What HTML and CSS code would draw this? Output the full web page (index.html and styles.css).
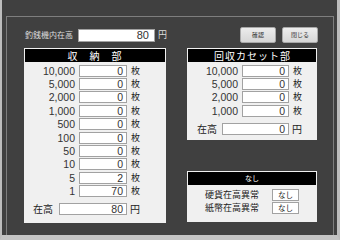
FILE: index.html
```html
<!DOCTYPE html>
<html lang="ja">
<head>
    <meta charset="UTF-8">
    <title>釣銭機内在高</title>
    <link rel="stylesheet" href="styles.css">
</head>
<body>
    <div class="window">
        <div class="frame">
            <div class="top-row">
                <span class="top-label">釣銭機内在高</span>
                <span class="box top-box">80</span>
                <span class="unit">円</span>
                <div class="buttons">
                    <button class="btn">確認</button>
                    <button class="btn">閉じる</button>
                </div>
            </div>
            <div class="columns">
                <div class="panel storage">
                    <div class="panel-head wide">収　納　部</div>
                    <div class="rows">
                        <div class="row"><span class="label">10,000</span><span class="box">0</span><span class="unit">枚</span></div>
                        <div class="row"><span class="label">5,000</span><span class="box">0</span><span class="unit">枚</span></div>
                        <div class="row"><span class="label">2,000</span><span class="box">0</span><span class="unit">枚</span></div>
                        <div class="row"><span class="label">1,000</span><span class="box">0</span><span class="unit">枚</span></div>
                        <div class="row"><span class="label">500</span><span class="box">0</span><span class="unit">枚</span></div>
                        <div class="row"><span class="label">100</span><span class="box">0</span><span class="unit">枚</span></div>
                        <div class="row"><span class="label">50</span><span class="box">0</span><span class="unit">枚</span></div>
                        <div class="row"><span class="label">10</span><span class="box">0</span><span class="unit">枚</span></div>
                        <div class="row"><span class="label">5</span><span class="box">2</span><span class="unit">枚</span></div>
                        <div class="row"><span class="label">1</span><span class="box">70</span><span class="unit">枚</span></div>
                    </div>
                    <div class="total total-left">
                        <span class="total-label">在高</span><span class="box">80</span><span class="unit">円</span>
                    </div>
                </div>
                <div class="side">
                    <div class="panel cassette">
                        <div class="panel-head spaced">回収カセット部</div>
                        <div class="rows">
                            <div class="row"><span class="label">10,000</span><span class="box">0</span><span class="unit">枚</span></div>
                            <div class="row"><span class="label">5,000</span><span class="box">0</span><span class="unit">枚</span></div>
                            <div class="row"><span class="label">2,000</span><span class="box">0</span><span class="unit">枚</span></div>
                            <div class="row"><span class="label">1,000</span><span class="box">0</span><span class="unit">枚</span></div>
                        </div>
                        <div class="total total-right">
                            <span class="total-label">在高</span><span class="box">0</span><span class="unit">円</span>
                        </div>
                    </div>
                    <div class="panel status">
                        <div class="panel-head small">なし</div>
                        <div class="status-row"><span class="status-label">硬貨在高異常</span><span class="flag">なし</span></div>
                        <div class="status-row"><span class="status-label">紙幣在高異常</span><span class="flag">なし</span></div>
                    </div>
                </div>
            </div>
        </div>
    </div>
</body>
</html>
```

FILE: styles.css
```css
body {
    margin: 0;
    background-color: #404040;
    font-family: "Liberation Sans", "Noto Sans CJK JP", sans-serif;
    color: #222;
}
.window {
    width: 340px;
    height: 240px;
    box-sizing: border-box;
    border-left: 2px solid #bdbdbd;
    border-right: 3px solid #bdbdbd;
    border-bottom: 5px solid #c4c4c4;
    padding-top: 16px;
}
.frame {
    margin-left: 4px;
    width: 328px;
    height: 219px;
    box-sizing: border-box;
    border: 1px solid #7e7e7e;
    border-bottom: none;
    padding: 10px 15px 0 17px;
}
.top-row {
    display: flex;
    align-items: center;
    height: 16px;
    line-height: 12px;
}
.top-label {
    font-family: "Noto Sans CJK JP", sans-serif;
    font-size: 8px;
    color: #dcdcdc;
    margin-left: 1px;
    width: 53px;
}
.top-row .unit {
    color: #dcdcdc;
    font-size: 9px;
    margin-left: 3px;
}
.box {
    display: block;
    flex: none;
    box-sizing: border-box;
    height: 12px;
    line-height: 10px;
    background: #fff;
    border: 1px solid #a2a2a2;
    text-align: right;
    padding-right: 3px;
    font-size: 10.5px;
    color: #333;
}
.top-box {
    width: 77px;
    height: 13px;
    line-height: 11px;
    padding-right: 5px;
    font-size: 11px;
}
.buttons {
    margin-left: auto;
    display: flex;
    gap: 6px;
}
.btn {
    width: 36px;
    height: 16px;
    padding: 0;
    border: 1px solid #a8a8a8;
    border-radius: 2px;
    background: linear-gradient(#ececec, #d6d6d6);
    font-family: "Noto Sans CJK JP", sans-serif;
    font-size: 6px;
    line-height: 8px;
    color: #333;
}
.columns {
    display: flex;
    gap: 21px;
    margin-top: 5px;
}
.panel {
    background: #f0f0f0;
    padding: 1px;
    box-sizing: border-box;
}
.storage {
    width: 142px;
    height: 175px;
}
.side {
    width: 130px;
}
.cassette {
    height: 92px;
}
.panel-head {
    height: 13px;
    line-height: 13px;
    background: #000;
    color: #fff;
    text-align: center;
    font-family: "Noto Sans CJK JP", sans-serif;
    font-size: 10px;
}
.panel-head.wide {
    letter-spacing: 1px;
}
.panel-head.spaced {
    letter-spacing: 1px;
    padding-left: 1px;
}
.panel-head.small {
    font-size: 7px;
}
.rows {
    margin-top: 2px;
}
.row {
    display: flex;
    align-items: center;
    height: 13.4px;
    line-height: 12px;
}
.row .label {
    width: 50px;
    text-align: right;
    font-size: 10.5px;
    color: #333;
}
.row .box {
    margin-left: 4px;
    width: 48px;
}
.cassette .row .box {
    width: 47px;
}
.unit {
    font-family: "Noto Sans CJK JP", sans-serif;
    font-size: 10px;
    margin-left: 3px;
    color: #222;
}
.row .unit {
    font-size: 9px;
    margin-left: 4px;
}
.total {
    display: flex;
    align-items: center;
    margin-top: 5px;
    line-height: 12px;
}
.total-label {
    font-family: "Noto Sans CJK JP", sans-serif;
    font-size: 10px;
    text-align: right;
}
.total-left .total-label {
    width: 28px;
}
.total-left .box {
    margin-left: 6px;
    width: 68px;
}
.total-right .total-label {
    width: 29px;
}
.total-right .box {
    margin-left: 5px;
    width: 67px;
}
.status {
    margin-top: 31px;
    height: 51px;
}
.status-row {
    display: flex;
    align-items: center;
    height: 13px;
    line-height: 12px;
    padding-left: 17px;
}
.panel-head + .status-row {
    margin-top: 3px;
}
.status-label {
    font-family: "Noto Sans CJK JP", sans-serif;
    font-size: 9px;
    width: 57px;
}
.flag {
    margin-left: 10px;
    box-sizing: border-box;
    width: 27px;
    height: 12px;
    line-height: 10px;
    background: #fff;
    border: 1px solid #a2a2a2;
    text-align: center;
    font-family: "Noto Sans CJK JP", sans-serif;
    font-size: 7.5px;
}
```
